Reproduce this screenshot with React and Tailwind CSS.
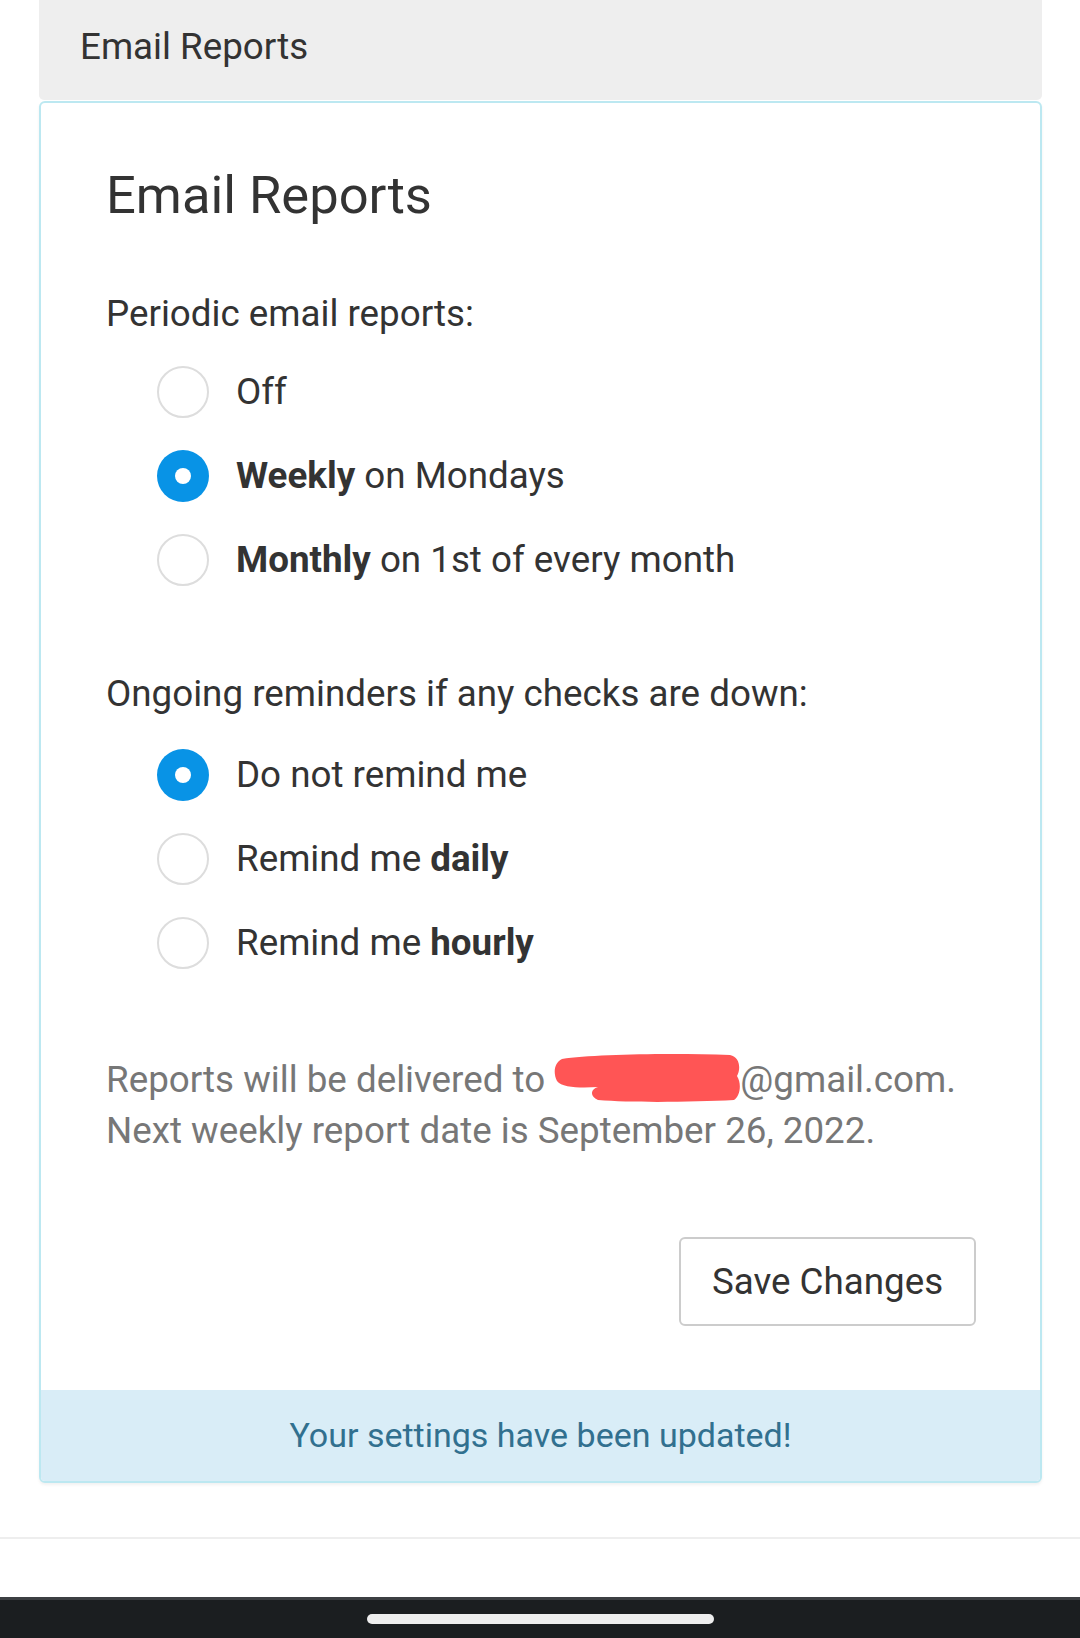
import { useState } from "react";

function Radio({ checked, onClick, children }) {
    return (
        <label onClick={onClick} className="flex h-[84px] items-center pl-[52px] cursor-pointer">
            {checked ? (
                <span className="flex h-[52px] w-[52px] shrink-0 items-center justify-center rounded-full bg-[#0893e6]">
                    <span className="h-[16px] w-[16px] rounded-full bg-white" />
                </span>
            ) : (
                <span className="h-[52px] w-[52px] shrink-0 rounded-full border-[2.5px] border-[#dddddd] bg-white" />
            )}
            <span className="ml-[27px] text-[36.75px] leading-[52px] text-[#333333]">{children}</span>
        </label>
    );
}

export default function App() {
    const [periodic, setPeriodic] = useState("weekly");
    const [remind, setRemind] = useState("none");

    return (
        <div className="flex h-[1638px] w-[1080px] flex-col bg-white font-['Roboto',sans-serif]">
            {/* Panel heading */}
            <div className="ml-[39px] flex h-[100px] w-[1003px] items-center rounded-b-[5px] bg-[#eeeeee] pb-[6px] pl-[41px] text-[36.75px] text-[#333333]">
                Email Reports
            </div>

            {/* Card */}
            <div className="ml-[39px] mt-[1px] w-[1003px] overflow-hidden rounded-[6px] border-2 border-[#bce8f1] bg-white shadow-[0_2px_3px_rgba(0,0,0,0.06)]">
                <div className="px-[64px] pb-[64px] pt-[62px]">
                    <h2 className="ml-[1px] text-[52.5px] font-normal leading-[60px] text-[#333333]">Email Reports</h2>

                    <p className="ml-[1px] mt-[63px] text-[36.75px] leading-[52px] text-[#333333]">Periodic email reports:</p>
                    <div className="mt-[10px]">
                        <Radio checked={periodic === "off"} onClick={() => setPeriodic("off")}>Off</Radio>
                        <Radio checked={periodic === "weekly"} onClick={() => setPeriodic("weekly")}>
                            <b className="font-bold">Weekly</b> on Mondays
                        </Radio>
                        <Radio checked={periodic === "monthly"} onClick={() => setPeriodic("monthly")}>
                            <b className="font-bold">Monthly</b> on 1st of every month
                        </Radio>
                    </div>

                    <p className="ml-[1px] mt-[66px] text-[36.75px] leading-[52px] text-[#333333]">
                        Ongoing reminders if any checks are down:
                    </p>
                    <div className="mt-[13px]">
                        <Radio checked={remind === "none"} onClick={() => setRemind("none")}>Do not remind me</Radio>
                        <Radio checked={remind === "daily"} onClick={() => setRemind("daily")}>
                            Remind me <b className="font-bold">daily</b>
                        </Radio>
                        <Radio checked={remind === "hourly"} onClick={() => setRemind("hourly")}>
                            Remind me <b className="font-bold">hourly</b>
                        </Radio>
                    </div>

                    <p className="ml-[1px] mt-[68px] text-[36.75px] leading-[51px] text-[#777777]">
                        Reports will be delivered to{" "}
                        <svg width="186" height="50" viewBox="0 0 186 50" className="inline-block align-[-11px]">
                            <path
                                d="M8 6 C 40 1, 120 0, 176 2 C 186 4, 187 16, 183 23 C 188 31, 186 43, 180 47 C 140 49, 80 50, 44 47 C 35 43, 37 36, 44 34 C 28 35, 8 35, 3 28 C -1 20, 0 10, 8 6 Z"
                                fill="#ff5555"
                            />
                        </svg>
                        @gmail.com.
                        <br />
                        Next weekly report date is September 26, 2022.
                    </p>

                    <div className="mt-[81px] flex justify-end">
                        <button className="h-[89px] w-[297px] rounded-[6px] border-2 border-[#cccccc] bg-white text-[36.75px] text-[#333333]">
                            Save Changes
                        </button>
                    </div>
                </div>

                {/* Alert */}
                <div className="flex h-[91px] items-center justify-center bg-[#d9edf7] text-[34px] text-[#31708f]">
                    Your settings have been updated!
                </div>
            </div>

            <div className="mt-[54px] h-[2px] w-full bg-[#eeeeee]" />
            <div className="flex-1" />

            {/* Navigation bar */}
            <div className="flex h-[41px] items-center justify-center border-t-[3px] border-[#3c3f42] bg-[#1b1e20]">
                <div className="h-[10px] w-[347px] rounded-full bg-[#eeeeee]" />
            </div>
        </div>
    );
}
